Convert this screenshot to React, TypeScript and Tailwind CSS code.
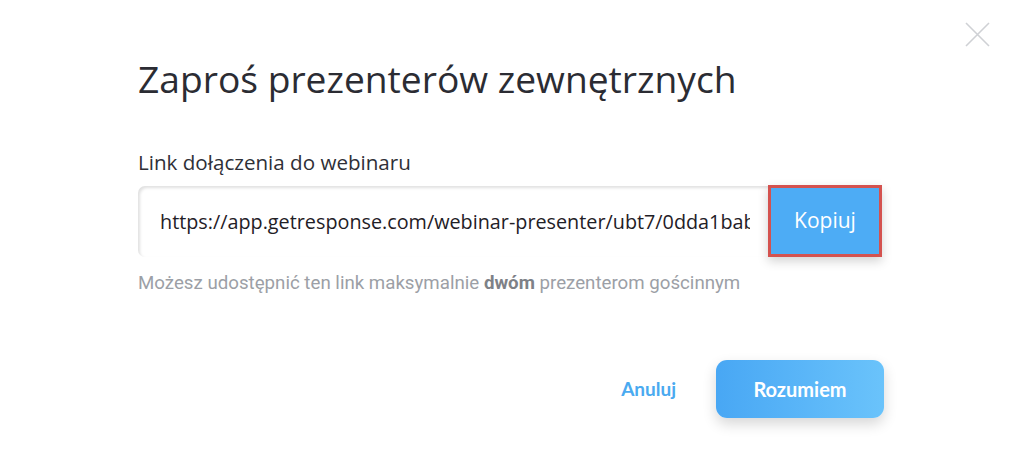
const LINK = 'https://app.getresponse.com/webinar-presenter/ubt7/0dda1bab1c2f'

export default function App() {
  return (
    <div className="relative h-[471px] w-[1024px] overflow-hidden bg-white font-['Open_Sans',sans-serif]">
      <button className="absolute left-[965px] top-[22px] text-[#cfd1d5]">
        <svg width="25" height="25" viewBox="0 0 25 25" fill="none" stroke="currentColor" strokeWidth="1.6">
          <path d="M1 1 L24 24 M24 1 L1 24" />
        </svg>
      </button>

      <div className="pl-[138px] pt-[54px]">
        <h1 className="text-[37.2px] leading-[50px] font-normal text-[#2b2c33]">
          Zaproś prezenterów zewnętrznych
        </h1>

        <p className="mt-[46px] text-[20.6px] leading-[24px] text-[#2f3037]">Link dołączenia do webinaru</p>

        <div className="mt-[12px] flex items-center">
          <div className="flex h-[71px] w-[630px] items-center overflow-hidden rounded-l-[7px] bg-white pl-[22px] pr-[18px] shadow-[inset_2px_2px_3px_rgba(0,0,0,0.12)]">
            <span className="overflow-hidden whitespace-nowrap text-[19.8px] text-[#1f2026]">{LINK}</span>
          </div>
          <div className="-mt-[1px] border-[3px] border-[#d4524f] shadow-[0_4px_10px_rgba(0,0,0,0.18)]">
            <button className="flex h-[66px] w-[108px] items-center justify-center bg-[#4dacf5] text-[21px] text-white">
              Kopiuj
            </button>
          </div>
        </div>

        <p className="mt-[14px] font-['Roboto',sans-serif] text-[18.7px] leading-[24px] text-[#9c9fa6]">
          Możesz udostępnić ten link maksymalnie <span className="font-bold text-[#7e8187]">dwóm</span> prezenterom gościnnym
        </p>

        <div className="mt-[65px] flex items-center justify-end gap-[40px] pr-[140px] font-['Lato',sans-serif]">
          <button className="text-[19px] font-bold text-[#4aaaf0]">Anuluj</button>
          <button className="h-[58px] w-[168px] rounded-[11px] bg-gradient-to-r from-[#48a7f4] to-[#6ac3fb] text-[20px] font-bold text-white shadow-[0_6px_14px_rgba(0,0,0,0.16)]">
            Rozumiem
          </button>
        </div>
      </div>
    </div>
  )
}
